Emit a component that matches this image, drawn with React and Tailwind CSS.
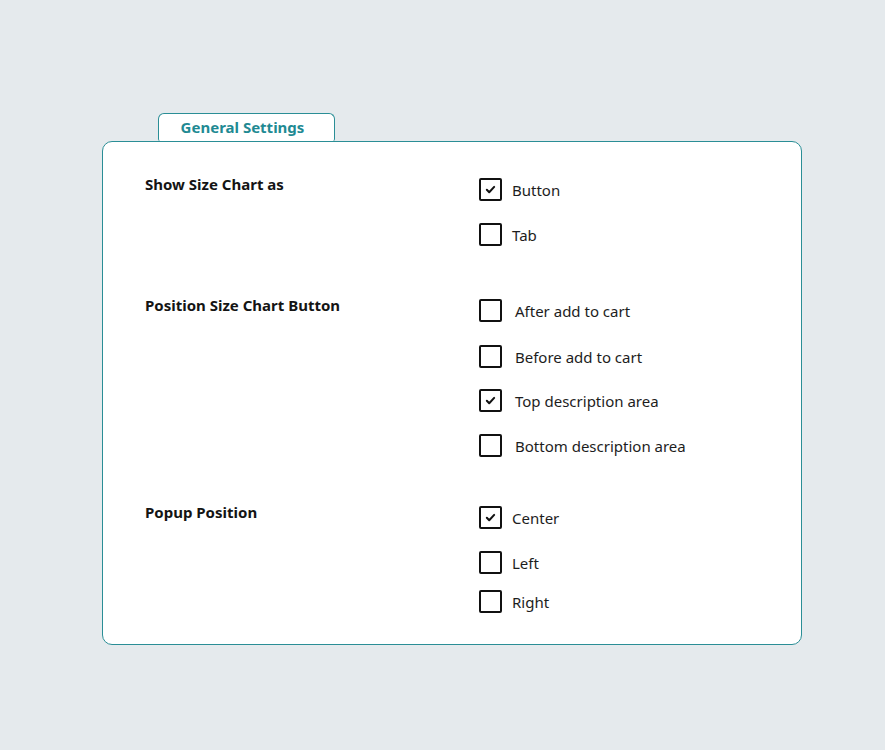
import React from 'react';

const Check = ({ checked }) => (
    <span className="flex h-[23px] w-[23px] shrink-0 items-center justify-center rounded-[2px] border-2 border-[#111] bg-white">
        {checked && (
            <svg viewBox="0 0 12 12" className="h-[11px] w-[11px]" fill="none" stroke="#111" strokeWidth="2.2" strokeLinecap="round" strokeLinejoin="round">
                <path d="M2 6.3l2.6 2.7L10 3.2" />
            </svg>
        )}
    </span>
);

const Section = ({ label, options, gaps, textGap, className = '' }) => (
    <div className={`flex ${className}`}>
        <div className="-mt-[4px] w-[334px] shrink-0 text-[15px] font-bold leading-5 text-[#141414]">{label}</div>
        <div className="flex flex-col">
            {options.map((o, i) => (
                <div key={o.text} className="flex items-center" style={{ marginTop: i ? gaps[i - 1] : 0 }}>
                    <Check checked={o.checked} />
                    <span className={`${textGap} text-[15px] leading-5 text-[#1d1d1d]`}>{o.text}</span>
                </div>
            ))}
        </div>
    </div>
);

export default function App() {
    return (
        <div className="min-h-[750px] w-full bg-[#e5eaed] pl-[102px] pt-[113px] font-['Noto_Sans','Lato',sans-serif]">
            {/* Tab */}
            <div className="ml-[56px] flex h-[28px] w-[177px] items-center justify-center rounded-t-[6px] rounded-b-[2px] border border-b-0 border-[#2a8e96] bg-white pr-[8px] text-[15px] font-bold text-[#1f8a93]">
                General Settings
            </div>
            {/* Card */}
            <div className="w-[700px] rounded-[10px] border border-[#2a8e96] bg-white pb-[31px] pl-[42px] pt-[36px]">
                <Section
                    label="Show Size Chart as"
                    textGap="ml-[10px]"
                    gaps={[22]}
                    options={[
                        { text: 'Button', checked: true },
                        { text: 'Tab' },
                    ]}
                />
                <Section
                    className="mt-[53px]"
                    label="Position Size Chart Button"
                    textGap="ml-[13px]"
                    gaps={[23, 21, 22]}
                    options={[
                        { text: 'After add to cart' },
                        { text: 'Before add to cart' },
                        { text: 'Top description area', checked: true },
                        { text: 'Bottom description area' },
                    ]}
                />
                <Section
                    className="mt-[49px]"
                    label="Popup Position"
                    textGap="ml-[10px]"
                    gaps={[22, 16]}
                    options={[
                        { text: 'Center', checked: true },
                        { text: 'Left' },
                        { text: 'Right' },
                    ]}
                />
            </div>
        </div>
    );
}
